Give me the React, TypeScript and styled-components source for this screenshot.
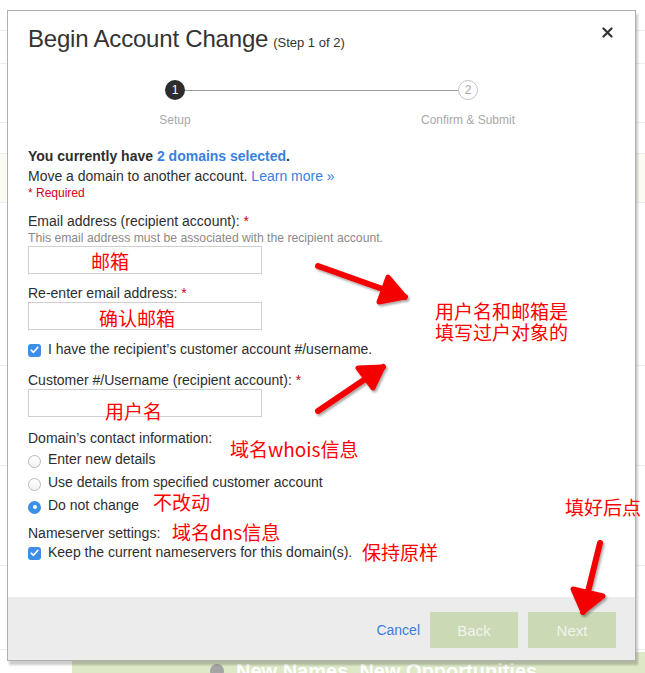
import styled, { createGlobalStyle } from "styled-components";

const GlobalStyle = createGlobalStyle`
  html, body { margin: 0; padding: 0; background: #fff; }
  body { font-family: "Liberation Sans", Arial, sans-serif; }
`;

const Screen = styled.div`
  position: relative;
  width: 645px;
  height: 673px;
  overflow: hidden;
  background: #fff;
`;

/* faded page behind the dialog */
const Backdrop = styled.div`
  display: flex;
  flex-direction: column;
`;

const BackRow = styled.div<{ $h: number; $tint?: boolean }>`
  box-sizing: border-box;
  height: ${(p) => p.$h}px;
  border-bottom: 1px solid #ececec;
  background: ${(p) => (p.$tint ? "#fbfbf3" : "#fff")};
`;

const Banner = styled.div`
  margin: 2px 0 0 72px;
  height: 40px;
  background: #dce8c6;
  display: flex;
  align-items: flex-start;
  gap: 12px;
  padding: 8px 0 0 138px;
  color: #fff;
  font-weight: bold;
  font-size: 20px;
`;

const BannerDot = styled.span`
  width: 14px;
  height: 14px;
  margin-top: 4px;
  border-radius: 50%;
  background: #a5a5a5;
`;

const Modal = styled.div`
  position: absolute;
  left: 7px;
  top: 10px;
  width: 629px;
  height: 651px;
  box-sizing: border-box;
  border: 1px solid #b0b0b0;
  background: #fff;
  box-shadow: 2px 4px 2px rgba(0, 0, 0, 0.2);
  display: flex;
  flex-direction: column;
  color: #2e2e2e;
`;

const Header = styled.div`
  display: flex;
  justify-content: space-between;
  align-items: flex-start;
  padding: 14px 22px 0 20px;
`;

const Title = styled.h1`
  margin: 0;
  font-size: 24px;
  line-height: 28px;
  font-weight: normal;
  color: #333;
  letter-spacing: -0.2px;
`;

const StepNote = styled.small`
  font-size: 13px;
  margin-left: 5px;
  letter-spacing: 0;
`;

const CloseButton = styled.button`
  margin-top: 2px;
  padding: 0;
  border: 0;
  background: none;
  width: 11px;
  height: 11px;
  display: flex;
`;

const Stepper = styled.div`
  position: relative;
  align-self: center;
  display: flex;
  gap: 143px;
  margin-top: 23px;
  &::before {
    content: "";
    position: absolute;
    top: 10px;
    left: 85px;
    right: 85px;
    height: 1px;
    background: #9a9a9a;
  }
`;

const Step = styled.div`
  width: 150px;
  display: flex;
  flex-direction: column;
  align-items: center;
`;

const StepDot = styled.div<{ $active?: boolean }>`
  position: relative;
  box-sizing: border-box;
  width: 20px;
  height: 20px;
  border-radius: 50%;
  display: flex;
  align-items: center;
  justify-content: center;
  font-size: 12px;
  background: ${(p) => (p.$active ? "#2d2d2d" : "#fff")};
  color: ${(p) => (p.$active ? "#fff" : "#a8a8a8")};
  border: ${(p) => (p.$active ? "none" : "1px solid #c4c4c4")};
`;

const StepLabel = styled.div`
  margin-top: 13px;
  font-size: 12px;
  line-height: 14px;
  color: #a9a9a9;
`;

const Body = styled.div`
  flex: 1;
  padding: 19px 20px 0;
  font-size: 14px;
`;

const Intro = styled.div`
  font-weight: bold;
  line-height: 20px;
`;

const Line = styled.div`
  line-height: 20px;
`;

const Link = styled.a`
  color: #3a7fdc;
  text-decoration: none;
`;

const Required = styled.div`
  color: #d0021b;
  font-size: 12px;
  line-height: 14px;
`;

const Label = styled.div<{ $gap: number }>`
  margin-top: ${(p) => p.$gap}px;
  line-height: 18px;
`;

const Star = styled.span`
  color: #d0021b;
`;

const Help = styled.div`
  font-size: 12.2px;
  line-height: 16px;
  color: #8a8a8a;
`;

const TextInput = styled.input`
  display: block;
  box-sizing: border-box;
  width: 234px;
  height: 28px;
  margin: 0;
  border: 1px solid #cfcfcf;
  background: #fff;
`;

const OptionRow = styled.label<{ $gap?: number; $h?: number }>`
  display: flex;
  align-items: center;
  gap: 7px;
  margin-top: ${(p) => p.$gap ?? 0}px;
  height: ${(p) => p.$h ?? 20}px;
`;

const Check = styled.span`
  width: 13px;
  height: 13px;
  border-radius: 3px;
  background: #3d8ee8;
  display: flex;
  align-items: center;
  justify-content: center;
  margin-top: 2px;
`;

const Radio = styled.span<{ $on?: boolean }>`
  box-sizing: border-box;
  width: 13px;
  height: 13px;
  border-radius: 50%;
  margin-top: 5px;
  display: flex;
  align-items: center;
  justify-content: center;
  background: ${(p) => (p.$on ? "#3d8ee8" : "linear-gradient(#fff, #f2f2f2)")};
  border: ${(p) => (p.$on ? "none" : "1px solid #b9b9b9")};
  &::after {
    content: "";
    width: 4px;
    height: 4px;
    border-radius: 50%;
    background: ${(p) => (p.$on ? "#fff" : "transparent")};
  }
`;

const Footer = styled.div`
  height: 63px;
  background: #ececec;
  display: flex;
  justify-content: flex-end;
  align-items: flex-start;
  gap: 10px;
  padding: 15px 19px 0 0;
  box-sizing: border-box;
`;

const CancelLink = styled.a`
  color: #3a7fdc;
  font-size: 14px;
  line-height: 36px;
  text-decoration: none;
`;

const GreenButton = styled.button`
  width: 88px;
  height: 36px;
  border: 0;
  background: #cbd9b5;
  color: #f1f4ec;
  font-family: "Liberation Sans", Arial, sans-serif;
  font-size: 15px;
`;

/* red hand-drawn annotations laid over the screenshot */
const Note = styled.div<{ $left: number; $top: number }>`
  position: absolute;
  left: ${(p) => p.$left}px;
  top: ${(p) => p.$top}px;
  font-family: "Noto Sans CJK SC", "Liberation Sans", sans-serif;
  font-size: 19px;
  line-height: 21px;
  color: #ff0000;
  white-space: nowrap;
`;

const ArrowLayer = styled.svg`
  position: absolute;
  left: 0;
  top: 0;
  pointer-events: none;
`;

type Arrow = { tail: [number, number]; tip: [number, number]; a: [number, number]; b: [number, number] };

const arrows: Arrow[] = [
  { tail: [318, 266], tip: [405, 297], a: [388, 277], b: [379, 302] },
  { tail: [318, 411], tip: [383, 367], a: [358, 368], b: [373, 388] },
  { tail: [600, 543], tip: [583, 612], a: [573, 589], b: [603, 596] },
];

const CheckMark = () => (
  <svg width="9" height="8" viewBox="0 0 9 8">
    <path d="M1.2 4.2 L3.5 6.3 L7.8 1.4" fill="none" stroke="#fff" strokeWidth="1.6" strokeLinecap="round" strokeLinejoin="round" />
  </svg>
);

export default function App() {
  return (
    <Screen>
      <GlobalStyle />

      <Backdrop>
        <BackRow $h={31} />
        <BackRow $h={33} />
        <BackRow $h={59} />
        <BackRow $h={31} />
        <BackRow $h={49} $tint />
        <BackRow $h={163} />
        <BackRow $h={100} />
        <BackRow $h={100} />
        <BackRow $h={84} />
        <Banner>
          <BannerDot />
          New Names, New Opportunities
        </Banner>
      </Backdrop>

      <Modal>
        <Header>
          <Title>
            Begin Account Change<StepNote>(Step 1 of 2)</StepNote>
          </Title>
          <CloseButton aria-label="Close">
            <svg width="11" height="11" viewBox="0 0 11 11">
              <path d="M1.5 1.5 L9.5 9.5 M9.5 1.5 L1.5 9.5" stroke="#333" strokeWidth="2.2" strokeLinecap="round" />
            </svg>
          </CloseButton>
        </Header>

        <Stepper>
          <Step>
            <StepDot $active>1</StepDot>
            <StepLabel>Setup</StepLabel>
          </Step>
          <Step>
            <StepDot>2</StepDot>
            <StepLabel>Confirm &amp; Submit</StepLabel>
          </Step>
        </Stepper>

        <Body>
          <Intro>
            You currently have <Link href="#">2 domains selected</Link>.
          </Intro>
          <Line>
            Move a domain to another account. <Link href="#">Learn more »</Link>
          </Line>
          <Required>* Required</Required>

          <Label $gap={12}>
            Email address (recipient account): <Star>*</Star>
          </Label>
          <Help>This email address must be associated with the recipient account.</Help>
          <TextInput />

          <Label $gap={10}>
            Re-enter email address: <Star>*</Star>
          </Label>
          <TextInput />

          <OptionRow $gap={9}>
            <Check>
              <CheckMark />
            </Check>
            I have the recipient’s customer account #/username.
          </OptionRow>

          <Label $gap={12}>
            Customer #/Username (recipient account): <Star>*</Star>
          </Label>
          <TextInput />

          <Label $gap={12}>Domain’s contact information:</Label>
          <OptionRow $h={23}>
            <Radio />
            Enter new details
          </OptionRow>
          <OptionRow $h={23}>
            <Radio />
            Use details from specified customer account
          </OptionRow>
          <OptionRow $h={23}>
            <Radio $on />
            Do not change
          </OptionRow>

          <Label $gap={8}>Nameserver settings:</Label>
          <OptionRow>
            <Check>
              <CheckMark />
            </Check>
            Keep the current nameservers for this domain(s).
          </OptionRow>
        </Body>

        <Footer>
          <CancelLink href="#">Cancel</CancelLink>
          <GreenButton>Back</GreenButton>
          <GreenButton>Next</GreenButton>
        </Footer>
      </Modal>

      <Note $left={91} $top={250}>邮箱</Note>
      <Note $left={99} $top={307}>确认邮箱</Note>
      <Note $left={105} $top={400}>用户名</Note>
      <Note $left={435} $top={300}>用户名和邮箱是</Note>
      <Note $left={435} $top={321}>填写过户对象的</Note>
      <Note $left={230} $top={438}>域名whois信息</Note>
      <Note $left={153} $top={491}>不改动</Note>
      <Note $left={172} $top={521}>域名dns信息</Note>
      <Note $left={362} $top={541}>保持原样</Note>
      <Note $left={565} $top={496}>填好后点</Note>

      <ArrowLayer width="645" height="673" viewBox="0 0 645 673">
        <defs>
          <filter id="arrowShadow" x="-20%" y="-20%" width="140%" height="140%">
            <feDropShadow dx="1.5" dy="2" stdDeviation="1.2" floodColor="#000" floodOpacity="0.35" />
          </filter>
        </defs>
        {arrows.map((ar, i) => (
          <g key={i} filter="url(#arrowShadow)" stroke="#f50000" fill="#f50000" strokeLinecap="round" strokeLinejoin="round">
            <line x1={ar.tail[0]} y1={ar.tail[1]} x2={ar.tip[0]} y2={ar.tip[1]} strokeWidth="6" />
            <polygon points={`${ar.a[0]},${ar.a[1]} ${ar.tip[0]},${ar.tip[1]} ${ar.b[0]},${ar.b[1]}`} strokeWidth="5" />
          </g>
        ))}
      </ArrowLayer>
    </Screen>
  );
}
